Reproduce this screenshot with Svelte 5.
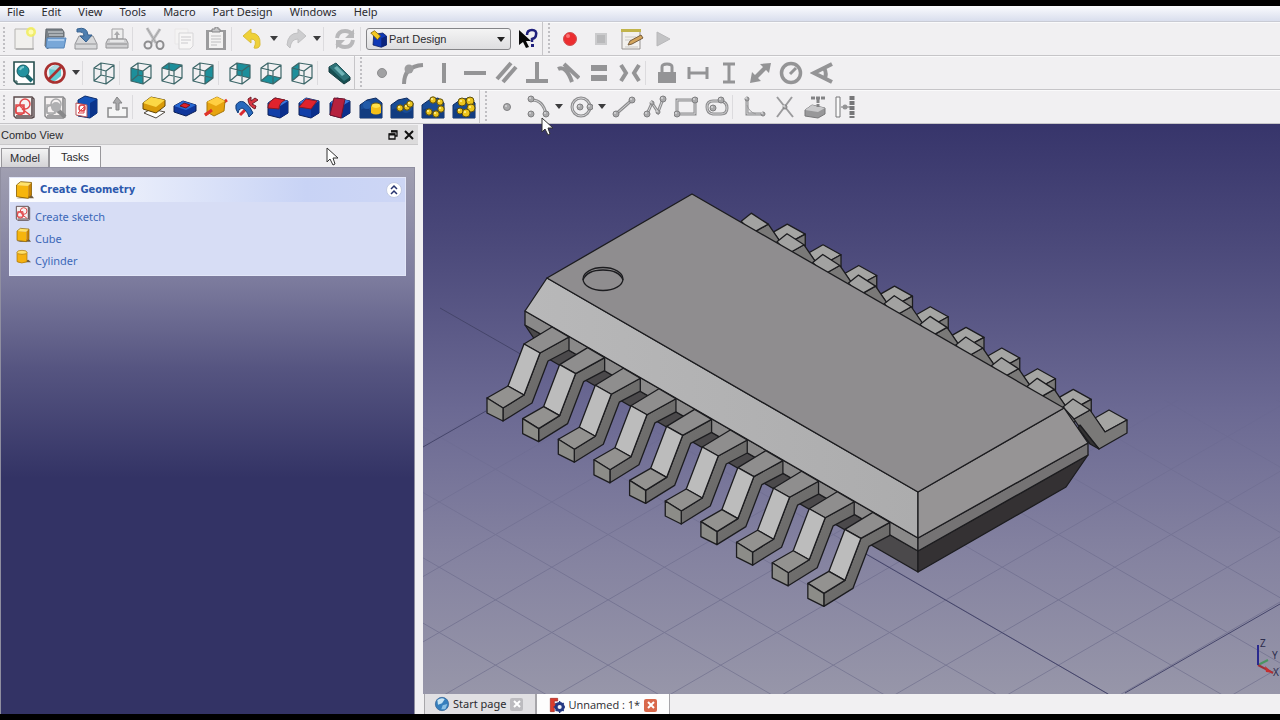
<script>
  const dot = (x, y, r = 3) =>
    `<circle cx="${x}" cy="${y}" r="${r}" fill="#a9a9ab" stroke="#808082" stroke-width="1"/><circle cx="${x - 1}" cy="${y - 1}" r="1" fill="#d8d8da"/>`;
  const thick = (d, w = 4) => `<path d="${d}" fill="none" stroke="#949496" stroke-width="${w}"/>`;
  const thin = (d) =>
    `<path d="${d}" fill="none" stroke="#8c8c8e" stroke-width="3"/><path d="${d}" fill="none" stroke="#d4d4d6" stroke-width="1"/>`;

  const faces = {
    front: 'M2 7 14 10V23L2 20Z',
    top: 'M2 7 9 2 22 4 14 10Z',
    right: 'M14 10 22 4V17L14 23Z',
    rear: 'M9 2 22 4V17L9 14Z',
    bottom: 'M2 20 9 14 22 17 14 23Z',
    left: 'M2 7 9 2V14L2 20Z'
  };
  const wire = (face) =>
    (face ? `<path d="${faces[face]}" fill="#1c8f9b"/>` : '') +
    `<g fill="none" stroke="#3c6668" stroke-width="1.2" stroke-linejoin="round"><path d="M2 7 9 2 22 4 14 10ZM2 20 9 14 22 17 14 23ZM2 7V20M9 2V14M22 4V17M14 10V23"/></g>`;
  const block = (extra) =>
    `<path d="M2 8 9 3 22 6V18L14 23 2 20Z" fill="#123fa8" stroke="#0b1f55"/><path d="M14 11 22 6V18L14 23Z" fill="#0b2f8c"/><path d="M2 8 9 3 22 6 14 11Z" fill="#3c78dc"/>${extra}`;
  const ball = (x, y, r = 3.2) =>
    `<circle cx="${x}" cy="${y}" r="${r}" fill="#edc51c" stroke="#5c4d0c"/><circle cx="${x - 1}" cy="${y - 1}" r="1" fill="#fff3a0"/>`;
  const base = '<path d="M1 10 8 5 17 3 23 8V23H1Z" fill="#184c96" stroke="#0e2a5e"/><path d="M1 15Q8 11 12 16T23 14V23H1Z" fill="#123c80"/>';
  const sketch = (ink, edge) =>
    `<path d="M2 2H20L22 4V22L20 23H4L2 21Z" fill="#f6f2f2" stroke="${edge}" stroke-width="1.4"/><path d="M20 3V21H4" fill="none" stroke="${edge}" stroke-width="1.6"/><g fill="none" stroke="${ink}" stroke-width="1.5"><circle cx="13" cy="9" r="5"/><circle cx="8" cy="15" r="4.500"/><path d="M4 10H12V18H4ZM10 14 18 20"/></g>`;
  const yellowBox =
    '<path d="M3 22H24L21 18Z" fill="#6d5b42"/><path d="M3 6 8 2 21 3 17 7Z" fill="#ffe36a"/><path d="M3 6 17 7V22L3 20Z" fill="#f6b50d"/><path d="M17 7 21 3V18L17 22Z" fill="#c98404"/><path d="M3 6 8 2 21 3V18L17 22 3 20Z" fill="none" stroke="#8b6206"/>';

  const art = {
    new: '<path d="M3 2H21V22H3Z" fill="#f1f0ed" stroke="#b5b4b2"/><path d="M4 22H22" stroke="#989797"/><circle cx="19" cy="5" r="5" fill="#f2ee57" opacity=".85"/><circle cx="19" cy="5" r="2.500" fill="#fffcb2"/>',
    open: '<path d="M3 2H19L21 5V10H5V22L2 19Z" fill="#7b8288" stroke="#62686e"/><path d="M5 5H20M6 8H20" stroke="#d8dcdf"/><path d="M4 11H23L21 21H3Z" fill="#78a7d8" stroke="#5785b9"/><path d="M5 13H21" stroke="#a9caed" stroke-width="2"/>',
    save: '<path d="M5 9H19L23 17V22H1V17Z" fill="#d7d8da" stroke="#929396"/><path d="M2 17H22" stroke="#929396"/><path d="M3 2Q13-1 14 8H18L12 15 6 9H10Q10 4 3 5Z" fill="#4f7fb0" stroke="#36618f"/>',
    print: '<path d="M7 2H18V12H7Z" fill="#eee" stroke="#a1a1a3"/><path d="M12 4 15 8H9ZM11 8H13V12H11Z" fill="#aaaaac"/><path d="M3 12H21L23 16V21H1V16Z" fill="#cfcfd1" stroke="#939395"/><path d="M2 17H22" stroke="#8a8a8c"/><path d="M5 14H19" stroke="#fff"/>',
    cut: '<path d="M5 1 14 16M18 2 9 16" stroke="#c0c0c2" stroke-width="3"/><path d="M5 1 14 16M18 2 9 16" stroke="#a4a4a6" fill="none"/><circle cx="6" cy="18" r="3.500" fill="none" stroke="#8e8e90" stroke-width="2"/><ellipse cx="18" cy="18" rx="3.500" ry="4" fill="none" stroke="#8e8e90" stroke-width="2"/>',
    copy: '<path d="M2 2H15V17H2Z" fill="#f4f3f3" stroke="#e8e7e8"/><path d="M6 6H20V19L17 22H6Z" fill="#f7f6f6" stroke="#d6d5d7"/><path d="M8 10H18M8 13H18M8 16H15" stroke="#cbcacd"/>',
    paste: '<path d="M2 3H22V23H2Z" fill="#9b9b9d"/><path d="M5 5H19V21H5Z" fill="#f3f2f2"/><path d="M8 5V2H11V0H14V2H16V5Z" fill="#c7c7c9" stroke="#858587"/><path d="M7 9H17M7 12H17M7 15H17M7 18H13" stroke="#bebec0"/>',
    undo: '<path d="M2 9 10 2V6Q20 6 19 18Q18 22 13 21Q17 12 10 12V16Z" fill="#efd138" stroke="#d9bc3c"/>',
    redo: '<path d="M22 9 14 2V6Q4 6 3 18L6 21Q7 12 14 12V16Z" fill="#cdcdcf" stroke="#c0c0c2"/>',
    refresh: '<g fill="none" stroke="#b8b8ba" stroke-width="4"><path d="M4 11Q5 4 12 4Q17 4 20 8"/><path d="M20 13Q19 20 12 20Q7 20 4 16"/></g><path d="M21 2V11H12ZM3 22V13H12Z" fill="#b8b8ba"/>',
    help: '<path d="M4 3V18L8 15 11 21 14 20 11 14H16Z" fill="#080808"/><path d="M12 8Q12 3 17 3T21 8Q21 11 17 12V15" fill="none" stroke="#20207c" stroke-width="2.500"/><path d="M16 17H19V20H16Z" fill="#20207c"/>',
    record: '<circle cx="12" cy="12" r="6.500" fill="#ec2d30" stroke="#cf5153"/><circle cx="10" cy="9" r="2" fill="#fa7274"/>',
    stop: '<path d="M7 7H17V17H7Z" fill="#b9b9bb" stroke="#cbcbcd" stroke-width="2"/>',
    note: '<path d="M2 3H20V22H2Z" fill="#f2f0ed" stroke="#979391"/><path d="M1 2H21V5H1Z" fill="#c2b44b"/><path d="M5 10H16M5 13H14M5 20H18" stroke="#cbc9c5"/><path d="M8 18 10 14 21 8 23 11 12 17Z" fill="#d4a55c" stroke="#785d3c"/>',
    play: '<path d="M6 5 19 12 6 19Z" fill="#c3c3c5" stroke="#b8b8ba"/>',

    fit: '<path d="M2 1H22V23H5L2 20Z" fill="#fff" stroke="#264f4e" stroke-width="1.600"/><path d="M2 20H5V23" fill="none" stroke="#264f4e"/><path d="M14 14 20 20" stroke="#16676f" stroke-width="4"/><circle cx="11" cy="10" r="6" fill="#2292a0" stroke="#145c64"/><path d="M8 9Q9 6 12 6" stroke="#80cbd1" fill="none" stroke-width="2"/>',
    style: '<path d="M6 8 12 4H18V15L12 20H7Z" fill="#61cdd2"/><path d="M6 8 12 4H18L13 9Z" fill="#b1dce0"/><circle cx="12" cy="12" r="9.500" fill="none" stroke="#a8302f" stroke-width="2.600"/><path d="M5 19 19 5" stroke="#a8302f" stroke-width="2.600"/>',
    axo: wire(), front: wire('front'), top: wire('top'), right: wire('right'),
    rear: wire('rear'), bottom: wire('bottom'), left: wire('left'),
    ruler: '<path d="M2 6 9 2 23 16V19L17 23 2 11Z" fill="#174f52" stroke="#143b3e"/><path d="M2 6 9 2 23 16 17 20Z" fill="#2f7378"/><path d="M7 7 10 5 18 13 15 15Z" fill="#6fb3b6"/>',

    cdot: '<circle cx="12" cy="12" r="4.500" fill="#a1a1a3" stroke="#8d8d8f"/>',
    arcon: '<path d="M3 23Q3 5 22 4" fill="none" stroke="#949496" stroke-width="4"/><circle cx="8" cy="8" r="4.500" fill="#9d9d9f"/>',
    vert: thick('M12 2V22'), horiz: thick('M1 12H23'),
    para: thick('M3 18 17 2M9 21 22 6'), perp: thick('M12 1V20M1 20H23'),
    tang: thick('M2 8Q10 4 16 21M8 3 23 17'), equal: thick('M4 7H20M4 17H20', 6),
    sym: '<path d="M3 4 8 12 3 20M21 4 16 12 21 20" fill="none" stroke="#949496" stroke-width="4"/>',
    lock: '<path d="M3 11H21V22H3Z" fill="#949496"/><path d="M7 11V6Q7 3 12 3T17 6V11" fill="none" stroke="#949496" stroke-width="3"/>',
    hdist: thick('M3 6V18M21 6V18M3 12H21', 3), vdist: thick('M6 3H18M6 21H18M12 3V21', 3),
    dist: '<path d="M23 2 21 12 18 9 10 17 13 20 2 22 4 11 7 14 15 6 12 3Z" fill="#949496"/>',
    radius: '<circle cx="12" cy="12" r="9.500" fill="none" stroke="#949496" stroke-width="3.500"/><path d="M11 13 17 7" stroke="#949496" stroke-width="3"/>',
    angle: '<path d="M22 3 4 12 22 21M14 7Q17 12 15 17" fill="none" stroke="#949496" stroke-width="4"/>',

    sketch: sketch('#e1494b', '#59494b'),
    editSketch: sketch('#a9a9ab', '#88888a') + '<path d="M14 14 22 22" stroke="#88888a" stroke-width="4"/><circle cx="13" cy="12" r="5" fill="#b0b0b2"/>',
    mapSketch: '<path d="M4 5 11 1 23 4V18L16 23 4 21Z" fill="#1554ba" stroke="#0b2b6a"/><path d="M16 8 23 4V18L16 23Z" fill="#0b348b"/><path d="M2 8 13 10V22L2 20Z" fill="#fff" stroke="#b45156"/><circle cx="8" cy="13" r="3" fill="none" stroke="#df4348" stroke-width="1.500"/><path d="M4 18 10 12V18H4" fill="none" stroke="#df4348"/>',
    leave: '<path d="M7 13H3V22H22V13H17" fill="#f5f5f5" stroke="#8a8a8c" stroke-width="1.500"/><path d="M12 2 17 8H14V15H11V8H8Z" fill="#a8a8aa" stroke="#858587"/>',
    pad: '<path d="M2 18 9 14 23 17 14 23Z" fill="#fff" stroke="#504a42"/><path d="M1 8 9 2 23 5V11L14 18 1 14Z" fill="#d99a08" stroke="#634606"/><path d="M1 8 9 2 23 5 14 12Z" fill="#fbd745"/>',
    pocket: '<path d="M1 11 10 6 23 10V16L13 21 1 17Z" fill="#10379c" stroke="#091e55"/><path d="M1 11 10 6 23 10 13 15Z" fill="#2768d3"/><path d="M7 11 11 8 17 10 13 13Z" fill="#df2026" stroke="#701322"/>',
    revolve: '<path d="M1 20 23 5" stroke="#e0342b" stroke-width="3"/><path d="M3 7 13 2 21 6 20 16 10 21 3 17Z" fill="#e7a40f" stroke="#a87708"/><path d="M3 7 13 2 21 6 12 11Z" fill="#ffcf42"/><path d="M1 20 8 15" stroke="#e0342b" stroke-width="3"/>',
    groove: '<path d="M5 20 10 15" stroke="#d92930" stroke-width="3"/><path d="M1 10Q4 5 9 7Q16 12 18 18L14 22Q12 15 7 13Q3 14 3 18Q0 14 1 10Z" fill="#2769bd" stroke="#123b78"/><path d="M13 4Q13 11 20 14L21 11 17 9 23 5 20 3 16 6V2Z" fill="#d83441" stroke="#71202a"/>',
    fillet: block('<path d="M2 13Q2 7 9 3L19 5Q13 8 13 14Z" fill="#e0232c" stroke="#861924"/>'),
    chamfer: block('<path d="M2 12 9 4 20 6 14 14Z" fill="#e0232c" stroke="#861924"/>'),
    draft: block('<path d="M6 3 17 4 13 23 2 20Z" fill="#b6213e" stroke="#70142c"/>'),
    mirror: base + '<ellipse cx="17" cy="11" rx="5" ry="3" fill="#ffe14b" stroke="#7b6005"/><path d="M12 11V18Q17 21 22 18V11Q17 15 12 11Z" fill="#f3bf19"/><circle cx="8" cy="10" r="4" fill="#225ba8"/>',
    linear: base + ball(10, 13) + ball(17, 12) + ball(20, 9),
    polar: base + ball(12, 5) + ball(19, 7) + ball(20, 14) + ball(15, 19) + ball(8, 17),
    multi: base + ball(10, 7, 4) + ball(18, 6, 4) + ball(19, 13, 4) + ball(14, 18, 4) + ball(8, 16, 3),

    point: dot(12, 12, 3.5),
    arc: thin('M6 5Q17 5 20 19') + dot(5, 4) + dot(5, 19) + dot(20, 19),
    circle: '<circle cx="12" cy="12" r="9" fill="none" stroke="#8c8c8e" stroke-width="3"/><circle cx="12" cy="12" r="9" fill="none" stroke="#d4d4d6"/>' + dot(11, 12) + dot(21, 12),
    line: thin('M4 19 20 5') + dot(4, 19) + dot(20, 5),
    poly: thin('M4 19 9 8 15 17 20 4') + dot(4, 19) + dot(9, 8, 2) + dot(15, 17, 2) + dot(20, 4),
    rect: thin('M3 5H21V19H3Z') + dot(3, 19) + dot(21, 5),
    slot: thin('M8 6H16Q22 7 22 13T16 19H8Q2 18 2 12T8 6Z') + dot(8, 13) + dot(16, 5),
    fillet2: thin('M5 3V19H21') + '<path d="M5 10Q7 17 14 19" fill="none" stroke="#9a9a9c"/>' + dot(5, 4, 2) + dot(21, 19, 2),
    trim: '<path d="M4 2 20 22M19 2 4 22" fill="none" stroke="#9b9b9d" stroke-width="2"/>' + dot(12, 12, 2),
    external: '<path d="M1 15 8 10 21 13V19L14 23 1 21Z" fill="#98989a" stroke="#78787a"/><path d="M1 15 8 10 21 13 14 17Z" fill="#c9c9cb"/><path d="M7 3H22M14 4V12" stroke="#838385" stroke-width="3" stroke-dasharray="4 1"/>',
    construct: '<path d="M1 2H5V22H1Z" fill="#fafafa" stroke="#777779"/><path d="M17 1V23" stroke="#777779" stroke-width="5" stroke-dasharray="4 1"/><path d="M6 12H15" stroke="#777779"/><circle cx="10" cy="12" r="2.500" fill="#949496"/>',

    body: '<path d="M5 6 17 4 22 8V20L15 23 4 20Z" fill="#1039b6" stroke="#091b5c"/><path d="M15 11 22 8V20L15 23Z" fill="#0b247c"/><path d="M1 4 6 1 14 8 10 13Z" fill="#f3c821" stroke="#785b05"/>',
    box: yellowBox,
    cyl: '<path d="M4 20H24L20 16Z" fill="#6d5b42"/><path d="M3 5V19Q10 23 18 19V5Z" fill="#f5b111" stroke="#a77206"/><ellipse cx="10.500" cy="5" rx="7.500" ry="3" fill="#ffe06b" stroke="#a77206"/>',
    globe: '<circle cx="12" cy="12" r="10" fill="#367fbd" stroke="#315d91"/><path d="M5 6Q12 1 16 5L12 11 6 13Z" fill="#c8e4f3"/><path d="M13 14 20 12 17 20 11 20Z" fill="#8cc1e5"/>',
    doc: '<path d="M2 2H13V6H8V10H12V14H8V22H2Z" fill="#db3c2d" stroke="#992b26"/><circle cx="16" cy="15" r="5.500" fill="none" stroke="#253983" stroke-width="4"/><path d="M16 6V24M7 15H25M10 9 22 21M22 9 10 21" stroke="#253983" stroke-width="2"/><circle cx="16" cy="15" r="3" fill="#f3f3f8"/>'
  };

  const menus = ['File', 'Edit', 'View', 'Tools', 'Macro', 'Part Design', 'Windows', 'Help'];
  const rows = [
    ['grip', 'new', 'open', 'save', 'print', 'sep', 'cut', 'copy', 'paste', 'sep', 'undo', 'drop', 'redo', 'drop', 'sep', 'refresh', 'sep', 'workbench', 'help', 'grip', 'record', 'stop', 'note', 'play'],
    ['grip', 'fit', 'style', 'drop', 'sep', 'axo', 'sep', 'front', 'top', 'right', 'sep', 'rear', 'bottom', 'left', 'sep', 'ruler', 'grip', 'cdot', 'arcon', 'vert', 'horiz', 'para', 'perp', 'tang', 'equal', 'sym', 'sep', 'lock', 'hdist', 'vdist', 'dist', 'radius', 'angle'],
    ['grip', 'sketch', 'editSketch', 'mapSketch', 'leave', 'sep', 'pad', 'pocket', 'revolve', 'groove', 'fillet', 'chamfer', 'draft', 'mirror', 'linear', 'polar', 'multi', 'grip', 'point', 'arc', 'drop', 'circle', 'drop', 'line', 'poly', 'rect', 'slot', 'sep', 'fillet2', 'trim', 'external', 'construct']
  ];
  const tasks = [['sketch', 'Create sketch'], ['box', 'Cube'], ['cyl', 'Cylinder']];
  const pins = [0, 1, 2, 3, 4, 5, 6, 7, 8, 9];
  const gridDown = Array.from({ length: 18 }, (_, i) => -487 + i * 65.3);
  const gridUp = Array.from({ length: 12 }, (_, i) => 446 + i * 65.3);
</script>

{#snippet icon(name, size)}
  <svg class="icon" width={size} height={size} viewBox="0 0 24 24" aria-hidden="true">{@html art[name]}</svg>
{/snippet}

{#snippet pointer()}
  <svg width="13" height="19" viewBox="0 0 13 19"><path d="M1 1V15L4 12 7 18 9 17 7 11H12Z" fill="#fff" stroke="#333" /></svg>
{/snippet}

<div class="screen">
  <nav class="menubar">
    {#each menus as m}<button>{m}</button>{/each}
  </nav>

  {#each rows as row}
    <div class="toolbar" role="toolbar">
      {#each row as item, i}
        {#if item === 'grip'}
          <span class="grip" class:later={i > 0}></span>
        {:else if item === 'sep'}
          <span class="sep"></span>
        {:else if item === 'drop'}
          <button class="drop" aria-label="More options"><svg width="8" height="5" viewBox="0 0 8 5"><path d="M0 0H8L4 5Z" fill="#3c3c3e" /></svg></button>
        {:else if item === 'workbench'}
          <label class="workbench">
            {@render icon('body', 18)}
            <select aria-label="Workbench"><option>Part Design</option></select>
            <svg class="chevron" width="8" height="5" viewBox="0 0 8 5"><path d="M0 0H8L4 5Z" fill="#222" /></svg>
          </label>
        {:else}
          <button class="tool" aria-label={item}>{@render icon(item, 24)}</button>
        {/if}
      {/each}
    </div>
  {/each}

  <main>
    <aside>
      <header class="dock-title">
        <span>Combo View</span>
        <button aria-label="Float"><svg width="10" height="10" viewBox="0 0 10 10"><path d="M3 1H9V6H7M1 4H7V9H1Z" fill="none" stroke="#111" stroke-width="1.300" /><path d="M3 1.500H9M1 4.500H7" stroke="#111" stroke-width="2" /></svg></button>
        <button aria-label="Close"><svg width="10" height="10" viewBox="0 0 10 10"><path d="M1 1 9 9M9 1 1 9" stroke="#111" stroke-width="2" /></svg></button>
      </header>
      <div class="dock-tabs"><button>Model</button><button class="on">Tasks</button></div>
      <section class="tasks">
        <div class="card">
          <div class="card-head">
            {@render icon('box', 20)}
            <h2>Create Geometry</h2>
            <button aria-label="Collapse"><svg width="16" height="16" viewBox="0 0 16 16"><circle cx="8" cy="8" r="7.500" fill="#fff" stroke="#c2cbe4" /><path d="M5 7 8 4 11 7M5 12 8 9 11 12" fill="none" stroke="#26336e" stroke-width="1.500" /></svg></button>
          </div>
          <ul>
            {#each tasks as [name, label]}
              <li><a href="#{name}">{@render icon(name, 16)}<span>{label}</span></a></li>
            {/each}
          </ul>
        </div>
      </section>
    </aside>

    <section class="work">
      <div class="view">
        <svg class="scene" viewBox="423 124 857 570" preserveAspectRatio="xMinYMin slice">
          <defs>
            <linearGradient id="fade" x1="0" y1="420" x2="0" y2="600" gradientUnits="userSpaceOnUse">
              <stop offset="0" stop-color="#fff" stop-opacity="0.150" /><stop offset="1" stop-color="#fff" />
            </linearGradient>
            <mask id="floor" maskUnits="userSpaceOnUse" x="423" y="400" width="857" height="300"><rect x="423" y="400" width="857" height="300" fill="url(#fade)" /></mask>
            <linearGradient id="bevel"><stop offset="0" stop-color="#b8b8b9" /><stop offset="1" stop-color="#acacad" /></linearGradient>
            <linearGradient id="shade" x1="0" y1="0" x2="1" y2="1"><stop offset="0" stop-color="#777675" /><stop offset="1" stop-color="#656463" /></linearGradient>
            <g id="far-pin">
              <path d="M1095 418 1109 410 1127 420 1105 432Z" fill="#a5a5a3" />
              <path d="M1074 419 1090 410 1105 432 1127 420V433L1099 449 1078 425Z" fill="#7a7978" />
              <path d="M1063 407 1073 399 1090 410 1074 419Z" fill="#a2a2a1" />
            </g>
            <g id="near-pin">
              <path d="M503 408V421L532 403 548 361 569 350V337L540 353 524 395Z" fill="url(#shade)" />
              <path d="M524 344 540 353 569 337 552 327Z" fill="#8f8e8e" />
              <path d="M524 344 540 353 524 395 508 386Z" fill="#bcbcbc" />
              <path d="M487 398 503 408 524 395 508 386Z" fill="#939290" />
              <path d="M487 398 503 408V421L487 413Z" fill="#8c8c88" />
            </g>
          </defs>

          <g mask="url(#floor)" stroke="#56567a" stroke-width="1" opacity="0.400">
            {#each gridDown as y}<path d="M423 {y}L1280 {y + 497}" />{/each}
            {#each gridUp as y}<path d="M423 {y}L1280 {y - 497}" />{/each}
          </g>
          <path d="M440 308 545 368M840 539 1108 694M1125 693 1280 604M423 447 486 411" stroke="#45456a" fill="none" stroke-width="1" />

          <g stroke="#1c1c1f" stroke-width="1.300" stroke-linejoin="round">
            {#each pins as i}<use href="#far-pin" transform="translate({(i - 9) * 35.75} {(i - 9) * 20.65})" />{/each}
            <path d="M1080 425 1099 449 1090 444 1078 428Z" fill="#333233" />
            <path d="M525 325 918 551V572L547 358Z" fill="#4b494b" />
            <path d="M918 551 1088 455 1066 487 918 572Z" fill="#343133" />
            <path d="M525 311 918 538V551L525 325Z" fill="#8a8989" />
            <path d="M918 538 1088 443V455L918 551Z" fill="#757374" />
            <path d="M547 278 918 492V538L525 311Z" fill="url(#bevel)" />
            <path d="M918 492 1064 408 1088 443 918 538Z" fill="#969495" />
            <path d="M692 194 547 278 918 492 1064 408Z" fill="#8f8d8f" />
            <ellipse cx="603" cy="279" rx="20" ry="11.500" fill="#8f8d8f" />
            <path d="M583 280Q587 270 603 270T623 280" fill="none" />
            {#each pins as i}<use href="#near-pin" transform="translate({i * 35.65} {i * 20.6})" />{/each}
          </g>

          <g fill="none" stroke-width="2">
            <path d="M1258 665 1268 660" stroke="#4a9460" /><path d="M1258 665 1273 673" stroke="#9e3038" /><path d="M1258 665V645" stroke="#29298e" />
          </g>
          <path d="M1265 666 1273 673 1266 672Z" fill="#c42f30" />
          <g class="axis"><text x="1260" y="647">Z</text><text x="1272" y="659">Y</text><text x="1273" y="676">X</text></g>
        </svg>
      </div>
      <div class="doc-tabs">
        <div class="doc"><button class="name">{@render icon('globe', 16)}Start page</button><button class="close" aria-label="Close Start page"><svg width="8" height="8" viewBox="0 0 8 8"><path d="M1 1 7 7M7 1 1 7" stroke="#fff" stroke-width="2" /></svg></button></div>
        <div class="doc on"><button class="name">{@render icon('doc', 16)}Unnamed : 1*</button><button class="close" aria-label="Close Unnamed"><svg width="8" height="8" viewBox="0 0 8 8"><path d="M1 1 7 7M7 1 1 7" stroke="#fff" stroke-width="2" /></svg></button></div>
      </div>
    </section>
  </main>

  <span class="pointer one">{@render pointer()}</span>
  <span class="pointer two">{@render pointer()}</span>
</div>

<style>
  :global(body) { background: #000; }
  * { box-sizing: border-box; }
  button { border: 0; padding: 0; background: none; font: inherit; color: inherit; }
  svg { display: block; flex: none; }
  .screen { position: relative; display: flex; flex-direction: column; height: 100vh; padding: 6px 0; overflow: hidden; background: #000; color: #2b2b2f; font: 11px/14px "Noto Sans", "Open Sans", sans-serif; }
  .menubar { display: flex; flex: none; gap: 1px; height: 16px; background: linear-gradient(#fafbfe, #d9deed); border-bottom: 1px solid #c9cbd4; }
  .menubar button { padding: 0 8px; line-height: 12px; height: 12px; white-space: nowrap; }
  .menubar button:first-child { padding-left: 7px; }
  .toolbar { display: flex; flex: none; align-items: center; height: 34px; background: #f1f0f2; border-bottom: 1px solid #c6c5c8; box-shadow: inset 0 1px #fafafb; }
  .tool { display: flex; flex: none; justify-content: center; width: 31px; }
  .drop { display: flex; flex: none; justify-content: center; width: 12px; }
  .sep { flex: none; width: 6px; height: 24px; border-left: 1px solid #dcdbde; }
  .grip { flex: none; width: 8px; height: 26px; background: radial-gradient(circle, #c0bfc3 1px, transparent 1px) 2px 0 / 4px 4px repeat-y; }
  .grip.later { width: 12px; height: 33px; border-left: 1px solid #c6c5c8; background-position: 4px 0; }
  .workbench { position: relative; display: flex; flex: none; align-items: center; width: 145px; height: 22px; padding-left: 3px; gap: 1px; border: 1px solid #858588; border-radius: 3px; background: linear-gradient(#f4f4f4, #dedee0); }
  .workbench select { flex: 1; appearance: none; border: 0; padding: 0; background: none; font: 11px/14px "Liberation Sans", sans-serif; color: inherit; }
  .chevron { position: absolute; right: 5px; top: 8px; }

  main { display: grid; grid-template-columns: 418px 1fr; gap: 5px; flex: 1; min-height: 0; background: #f1f0f2; }
  aside { display: flex; flex-direction: column; min-height: 0; }
  .dock-title { display: flex; flex: none; align-items: center; gap: 6px; height: 20px; margin-top: 1px; padding: 0 4px 0 1px; background: #dcdbdc; border-bottom: 1px solid #c9c8ca; font-family: "Liberation Sans", sans-serif; }
  .dock-title span { flex: 1; }
  .dock-tabs { display: flex; flex: none; align-items: flex-end; height: 22px; padding-left: 1px; font-family: "Liberation Sans", sans-serif; }
  .dock-tabs button { height: 19px; padding: 0 8px; border: 1px solid #98979b; border-bottom: 0; background: linear-gradient(#f3f3f3, #d4d3d6); }
  .dock-tabs .on { height: 21px; padding: 0 11px; background: #fbfbfc; }
  .tasks { flex: 1; min-height: 0; margin-right: 3px; padding: 9px 8px; border: 1px solid #8f8ea0; border-bottom: 0; background: linear-gradient(#a09fb1 0, #7d7c9e 110px, #565581 200px, #333365 310px); }
  .card { border: 1px solid #e2e6f8; background: #d7ddf5; color: #3c68b8; }
  .card-head { display: flex; align-items: center; gap: 6px; height: 24px; padding: 0 3px 0 4px; background: linear-gradient(90deg, #fff, #c8d3f5 75%, #cdd6f5); }
  h2 { flex: 1; margin: 0; font: bold 11px/14px "DejaVu Sans Condensed", "DejaVu Sans", sans-serif; color: #2c59ad; }
  ul { margin: 0; padding: 3px 5px 4px; list-style: none; }
  li a { display: flex; gap: 4px; height: 22px; color: inherit; text-decoration: none; }
  li span { line-height: 24px; }

  .work { display: flex; flex-direction: column; min-width: 0; min-height: 0; }
  .view { flex: 1; min-height: 0; background: linear-gradient(#37356b, #4c4a7b 22%, #6b6993 50%, #8482a0 75%, #9796a9); }
  .scene { width: 100%; height: 100%; }
  .axis { font: 10px "Noto Sans", sans-serif; fill: #2d2d4d; }
  .doc-tabs { display: flex; flex: none; height: 20px; padding-left: 1px; }
  .doc { display: flex; align-items: center; gap: 4px; padding: 0 12px 0 9px; border: solid #a7a6aa; border-width: 0 1px; background: #e1e0e3; }
  .doc.on { padding: 2px 12px 0; background: #fdfdfd; }
  .doc.on .name { font-family: "Open Sans", "Noto Sans", sans-serif; }
  .name { display: flex; align-items: center; gap: 3px; white-space: nowrap; }
  .close { display: grid; place-items: center; width: 13px; height: 13px; border-radius: 2px; background: #bcbbbf; }
  .on .close { background: #d9694c; }
  .pointer { position: absolute; pointer-events: none; }
  .one { left: 541px; top: 117px; }
  .two { left: 326px; top: 147px; }
</style>
